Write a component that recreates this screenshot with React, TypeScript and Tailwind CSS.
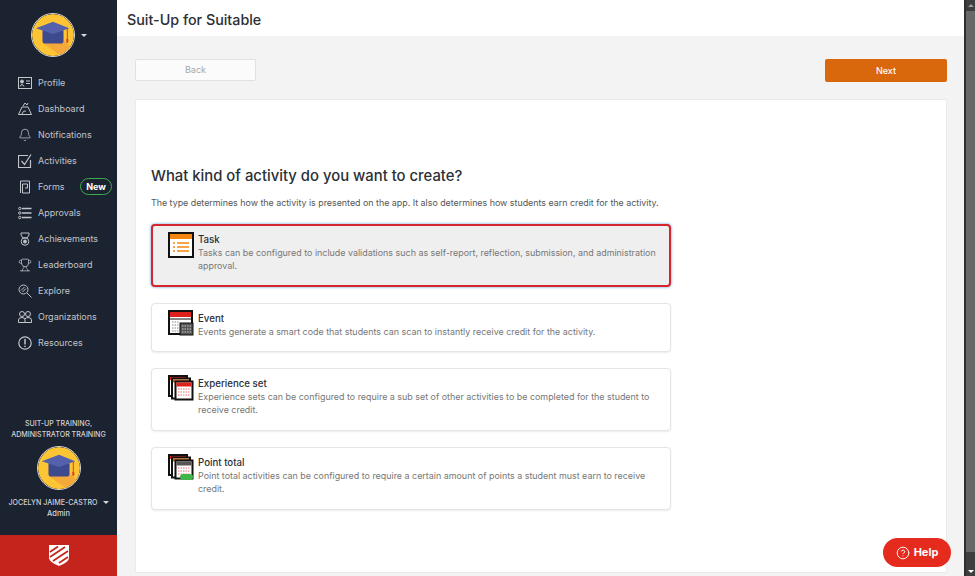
import React from 'react';
import { Bell, CircleHelp, Trophy } from 'lucide-react';

const font = { fontFamily: 'Inter, sans-serif' };

const Cap: React.FC<{ size: number }> = ({ size }) => (
    <svg width={size} height={size} viewBox="0 0 44 44" className="rounded-full border border-[#d8d8d8]">
        <circle cx="22" cy="22" r="22" fill="#fdc534" />
        <path d="M11 18 L33 18 L33 27 L43 37 A22 22 0 0 1 29 43 L11 30 Z" fill="#f4a93b" />
        <path d="M11 17 V28 Q11 31 14 31 H30 Q33 31 33 28 V17 Z" fill="#3e4a8e" />
        <path d="M22 8 L39 15 L22 21 L4 15 Z" fill="#5561ad" />
        <path d="M37 15 V26" stroke="#d9342b" strokeWidth="1" />
        <rect x="36" y="26" width="2" height="4" fill="#d9342b" />
    </svg>
);

const icon = { width: 14, height: 14, viewBox: '0 0 14 14', fill: 'none', stroke: '#c2c5ca', strokeWidth: 1 };

const ProfileIcon = () => (
    <svg {...icon}><rect x="0.5" y="1.5" width="13" height="11" /><circle cx="4" cy="5.5" r="1.5" fill="#c2c5ca" /><path d="M2 10.5 Q4 6.5 6 10.5 M8 5 H12 M8 7.5 H12" /></svg>
);
const DashboardIcon = () => (
    <svg {...icon}><path d="M0.5 12.5 L4 5 H10 L13.5 12.5 Z M4 12 Q5 8 8 9 M5 4 L7 1 L9 3 L10 1" /></svg>
);
const ActivitiesIcon = () => (
    <svg {...icon}><path d="M10 1.5 H0.5 V13.5 H12.5 V6 M3.5 7 L6.5 10.5 L13 0.5" strokeWidth="1.2" /></svg>
);
const FormsIcon = () => (
    <svg {...icon}><path d="M2.5 13 V1 H11.5 V13 H4.5 V4 H9.5 V8 H7" /></svg>
);
const ApprovalsIcon = () => (
    <svg {...icon}><circle cx="1.8" cy="2.5" r="1.2" /><circle cx="1.8" cy="7" r="1.2" /><circle cx="1.8" cy="11.5" r="1.2" /><path d="M4 2.5 H13.5 M4 7 H13.5 M4 11.5 H13.5" strokeWidth="1.5" /></svg>
);
const AchievementsIcon = () => (
    <svg {...icon}><path d="M3 1 H11 V3 L9 6 H5 L3 3 Z" /><circle cx="7" cy="9.5" r="3.8" /><circle cx="7" cy="9.5" r="1.5" fill="#c2c5ca" /></svg>
);
const ExploreIcon = () => (
    <svg {...icon}><circle cx="5.5" cy="5.5" r="4.5" /><path d="M3 6.5 L6.5 3 M4.5 8 L8 4.5 M9 9 L13.5 13.5" /></svg>
);
const OrganizationsIcon = () => (
    <svg {...icon}><circle cx="4" cy="4" r="2.5" /><circle cx="10" cy="4" r="2.5" /><path d="M0.5 12.5 V10 Q0.5 7.5 4 7.5 Q7 7.5 7 10 V12.5 Z M7 9 Q8 7.5 10 7.5 Q13.5 7.5 13.5 10 V12.5 H7" /></svg>
);
const ResourcesIcon = () => (
    <svg {...icon}><circle cx="7" cy="7" r="6.2" strokeWidth="1.2" /><path d="M7 3 V8.5 M7 9.8 V11" strokeWidth="1.5" /></svg>
);

const nav: { label: string; icon: React.ReactNode; badge?: boolean }[] = [
    { label: 'Profile', icon: <ProfileIcon /> },
    { label: 'Dashboard', icon: <DashboardIcon /> },
    { label: 'Notifications', icon: <Bell size={14} strokeWidth={1.3} /> },
    { label: 'Activities', icon: <ActivitiesIcon /> },
    { label: 'Forms', icon: <FormsIcon />, badge: true },
    { label: 'Approvals', icon: <ApprovalsIcon /> },
    { label: 'Achievements', icon: <AchievementsIcon /> },
    { label: 'Leaderboard', icon: <Trophy size={14} strokeWidth={1.3} /> },
    { label: 'Explore', icon: <ExploreIcon /> },
    { label: 'Organizations', icon: <OrganizationsIcon /> },
    { label: 'Resources', icon: <ResourcesIcon /> },
];

const TaskIcon = () => (
    <svg width="26" height="26" viewBox="0 0 26 26">
        <rect x="1" y="1" width="24" height="24" fill="#fff" stroke="#111" strokeWidth="2" />
        <rect x="2" y="2" width="22" height="5" fill="#f5860f" />
        <path d="M9 11 H21 M9 15 H21 M9 19 H21" stroke="#f5860f" strokeWidth="1.5" />
        <path d="M5 11 H7 M5 15 H7 M5 19 H7" stroke="#f5860f" strokeWidth="1.5" />
    </svg>
);
const EventIcon = () => (
    <svg width="26" height="26" viewBox="0 0 26 26">
        <rect x="1" y="1" width="23" height="23" fill="#fff" stroke="#111" strokeWidth="2" />
        <rect x="2" y="2" width="21" height="5" fill="#e0201a" />
        <path d="M1 9 H24" stroke="#111" />
        <path d="M4 12 H11 M4 15 H11 M4 18 H11 M4 21 H11" stroke="#888" strokeDasharray="1.5 1" />
        <rect x="12" y="13" width="13" height="12" fill="#555" stroke="#111" />
        <path d="M14 16 H23 M14 19 H23 M14 22 H23" stroke="#ccc" strokeDasharray="1.5 1" />
    </svg>
);
const Stack = ({ badge }: { badge?: boolean }) => (
    <svg width="26" height="26" viewBox="0 0 26 26">
        <rect x="1" y="1" width="18" height="20" fill="#fff" stroke="#111" strokeWidth="2" />
        <rect x="2" y="2" width="16" height="3" fill="#e0201a" />
        <rect x="4" y="3.5" width="18" height="20" fill="#fff" stroke="#111" strokeWidth="2" />
        <rect x="5" y="4.5" width="16" height="3" fill="#c86a1b" />
        <rect x="7.5" y="6.5" width="17" height="18" fill="#fff" stroke="#111" strokeWidth="2" />
        <rect x="8.5" y="7.5" width="15" height="4" fill={badge ? '#555' : '#e0201a'} />
        <path d="M10 14 H22 M10 17 H22 M10 20 H22" stroke="#f0a0a0" strokeWidth="1.5" strokeDasharray="1.5 1" />
        {badge && <rect x="12" y="20" width="13" height="6" rx="3" fill="#3fb54a" />}
    </svg>
);

const options = [
    { title: 'Task', text: 'Tasks can be configured to include validations such as self-report, reflection, submission, and administration approval.', icon: <TaskIcon />, h: 'h-[63px]', selected: true },
    { title: 'Event', text: 'Events generate a smart code that students can scan to instantly receive credit for the activity.', icon: <EventIcon />, h: 'h-[49px]' },
    { title: 'Experience set', text: 'Experience sets can be configured to require a sub set of other activities to be completed for the student to receive credit.', icon: <Stack />, h: 'h-[63px]' },
    { title: 'Point total', text: 'Point total activities can be configured to require a certain amount of points a student must earn to receive credit.', icon: <Stack badge />, h: 'h-[63px]' },
];

export default function App() {
    return (
        <div style={font} className="flex h-[576px] w-[975px] overflow-hidden bg-[#f3f3f3]">
            <aside className="flex w-[117px] shrink-0 flex-col bg-[#1b2230] text-[#c2c5ca]">
                <div className="flex items-center justify-center gap-[6px] pt-[13px]">
                    <Cap size={44} />
                    <span className="h-0 w-0 border-x-[3px] border-t-[3px] border-x-transparent border-t-[#d8d8d8]" />
                </div>
                <nav className="mt-[13px] flex flex-col">
                    {nav.map((n) => (
                        <div key={n.label} className="relative flex h-[26px] items-center gap-[6px] pl-[18px] text-[9px]">
                            <span className="flex w-[14px] justify-center">{n.icon}</span>
                            {n.label}
                            {n.badge && (
                                <span className="absolute left-[80px] top-[4px] flex h-[17px] w-[32px] items-center justify-center rounded-full border border-[#3cab4a] text-[9px] font-bold text-white">
                                    New
                                </span>
                            )}
                        </div>
                    ))}
                </nav>
                <div className="mt-auto flex flex-col items-center text-center text-[7.1px] font-medium leading-[11px] text-[#d0d3d8]">
                    <div>SUIT-UP TRAINING,<br />ADMINISTRATOR TRAINING</div>
                    <div className="mt-[6px]"><Cap size={44} /></div>
                    <div className="mt-[7px] flex items-center gap-[5px]">
                        JOCELYN JAIME-CASTRO
                        <span className="h-0 w-0 border-x-[3px] border-t-[3px] border-x-transparent border-t-[#d8d8d8]" />
                    </div>
                    <div className="text-[7.5px]">Admin</div>
                </div>
                <div className="mt-[16px] flex h-[41px] items-center justify-center bg-[#c4241c]">
                    <svg width="22" height="23" viewBox="0 0 22 23">
                        <path d="M1 1 H21 V14 Q21 18 11 22 Q1 18 1 14 Z" fill="#fff" />
                        <path d="M2 8 L10 2.5 M2 13 L17 3 M5 17 L20 7 M11 19 L20 13" stroke="#c4241c" strokeWidth="1.8" />
                    </svg>
                </div>
            </aside>

            <main className="relative flex min-w-0 flex-1 flex-col">
                <header className="flex h-[36px] items-center bg-white pl-[10px] pt-[3px] text-[14.3px] font-medium text-[#2b2f36]">
                    Suit-Up for Suitable
                </header>
                <div className="flex flex-1 flex-col pl-[18px] pr-[17px] pt-[23px]">
                    <div className="flex justify-between">
                        <button className="h-[22px] w-[121px] rounded-[2px] border border-[#dde2e2] bg-[#fbfbfb] text-[9px] text-[#a8a8a8]">Back</button>
                        <button className="h-[23px] w-[122px] rounded-[2px] bg-[#d9670b] text-[9px] font-medium text-white">Next</button>
                    </div>
                    <section className="mt-[17px] flex h-[474px] flex-col border border-[#ebebeb] bg-white pl-[15px] pt-[66px]">
                        <h1 className="text-[14.85px] font-medium leading-[20px] text-[#2b2f36]">What kind of activity do you want to create?</h1>
                        <p className="mt-[11px] text-[8.875px] leading-[12px] text-[#555]">
                            The type determines how the activity is presented on the app. It also determines how students earn credit for the activity.
                        </p>
                        <div className="mt-[15px] flex w-[520px] flex-col gap-[16px]">
                            {options.map((o) => (
                                <div
                                    key={o.title}
                                    className={`flex ${o.h} gap-[4px] rounded-[4px] pt-[6px] ${o.selected ? 'border-2 border-[#d4262c] bg-[#efefef] pl-[15px] shadow-[0_0_3px_#5b9bd5]' : 'border border-[#e5e5e5] bg-white pl-[16px] shadow-[0_1px_2px_rgba(0,0,0,0.08)]'}`}
                                >
                                    <div className="shrink-0">{o.icon}</div>
                                    <div className={`pr-[8px] ${o.selected ? 'mt-px' : 'mt-[2px]'}`}>
                                        <div className="text-[9.7px] font-medium leading-[13px] text-[#2b2f36]">{o.title}</div>
                                        <div className="text-[8.92px] leading-[13px] text-[#777]">{o.text}</div>
                                    </div>
                                </div>
                            ))}
                        </div>
                    </section>
                </div>
                <button className="absolute bottom-[9px] right-[13px] flex h-[29px] w-[68px] items-center justify-center gap-[4px] rounded-full bg-[#e52b1e] text-[11px] font-bold text-white">
                    <CircleHelp size={14} strokeWidth={1.6} />
                    Help
                </button>
            </main>

            <div className="flex w-[11px] shrink-0 flex-col items-center border-l-2 border-[#2f2f2f] bg-[#3e3e3e]">
                <span className="mt-[4px] h-0 w-0 border-x-[3px] border-b-[3px] border-x-transparent border-b-[#9a9a9a]" />
                <div className="mt-[4px] h-[541px] w-full bg-[#686868]" />
                <span className="mt-auto mb-[3px] h-0 w-0 border-x-[3px] border-t-[3px] border-x-transparent border-t-white" />
            </div>
        </div>
    );
}
